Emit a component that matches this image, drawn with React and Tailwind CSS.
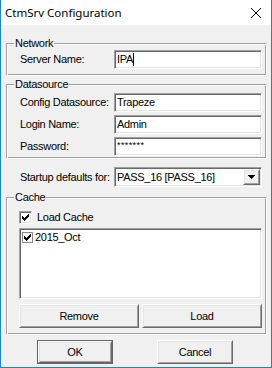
import React from 'react';

// classic Win32 3D edges
const sunken =
  'border border-t-[#a0a0a0] border-l-[#a0a0a0] border-r-white border-b-white shadow-[inset_1px_1px_0_#696969,inset_-1px_-1px_0_#e3e3e3]';
const raised =
  'border border-t-white border-l-white border-r-[#696969] border-b-[#696969] shadow-[inset_1px_1px_0_#e3e3e3,inset_-1px_-1px_0_#a0a0a0]';
const etched =
  'border border-t-[#a0a0a0] border-l-[#a0a0a0] border-r-white border-b-white shadow-[inset_1px_1px_0_#fff,inset_-1px_-1px_0_#a0a0a0]';

const Check = () => (
  <svg width="7" height="7" viewBox="0 0 7 7" shapeRendering="crispEdges">
    <path d="M0 2h1v3H0zM1 3h1v3H1zM2 4h1v3H2zM3 3h1v3H3zM4 2h1v3H4zM5 1h1v3H5zM6 0h1v3H6z" fill="#000" />
  </svg>
);

const GroupBox = ({ title, className = '', children }) => (
  <div className={`relative ${etched} ${className}`}>
    <span className="absolute -top-[7px] left-[7px] bg-[#f0f0f0] px-[1px] leading-[13px] whitespace-nowrap">{title}</span>
    {children}
  </div>
);

const Field = ({ label, children }) => (
  <div className="flex items-center">
    <span className="flex-1 min-w-0 pl-[1px] whitespace-nowrap">{label}</span>
    {children}
  </div>
);

const TextBox = ({ value, caret, password }) => (
  <div className={`w-[148px] h-[19px] shrink-0 bg-white ${sunken} flex items-center pl-[2px]`}>
    {password ? (
      <span className="whitespace-nowrap text-[9px] leading-none tracking-[0.4px] -mt-[2px]">{value}</span>
    ) : (
      <span className="whitespace-nowrap">{value}</span>
    )}
    {caret && <span className="w-px h-[13px] bg-black" />}
  </div>
);

const Button = ({ children, className = '' }) => (
  <button className={`bg-[#f0f0f0] ${raised} flex items-center justify-center font-normal ${className}`}>
    {children}
  </button>
);

export default function App() {
  return (
    <div className="w-[272px] h-[368px] flex flex-col bg-white border-x border-b border-[#1883d7] font-['Liberation_Sans',Arial,sans-serif] text-[11px] leading-[13px] tracking-[-0.3px] text-black select-none overflow-hidden">
      {/* Title bar */}
      <div className="h-[25px] shrink-0 flex items-center justify-between pl-[4px] pr-[10px] bg-white">
        <span className="font-['Noto_Sans',sans-serif] text-[11.5px] tracking-normal">CtmSrv Configuration</span>
        <svg width="10" height="10" viewBox="0 0 10 10">
          <path d="M0 0L10 10M10 0L0 10" stroke="#000" strokeWidth="1" />
        </svg>
      </div>

      <div className="flex-1 bg-[#f0f0f0] pl-[5px] pr-[4px]">
        <GroupBox title="Network" className="mt-[18px] pt-[6px] pb-[6px] pl-[12px] pr-[4px]">
          <Field label="Server Name:">
            <TextBox value="IPA" caret />
          </Field>
        </GroupBox>

        <GroupBox title="Datasource" className="mt-[8px] pt-[8px] pb-[2px] pl-[12px] pr-[4px] flex flex-col gap-[3px]">
          <Field label="Config Datasource:">
            <TextBox value="Trapeze" />
          </Field>
          <Field label="Login Name:">
            <TextBox value="Admin" />
          </Field>
          <Field label="Password:">
            <TextBox value="*******" password />
          </Field>
        </GroupBox>

        <div className="mt-[8px] pl-[13px] pr-[5px]">
          <Field label="Startup defaults for:">
            <div className={`w-[148px] h-[20px] shrink-0 bg-white ${sunken} flex p-[1px]`}>
              <span className="flex-1 pl-[1px] leading-[16px] whitespace-nowrap">PASS_16 [PASS_16]</span>
              <div className={`w-[17px] h-full bg-[#f0f0f0] ${raised} flex items-center justify-center`}>
                <svg width="7" height="4" viewBox="0 0 7 4" shapeRendering="crispEdges">
                  <path d="M0 0h7v1H0zM1 1h5v1H1zM2 2h3v1H2zM3 3h1v1H3z" fill="#000" />
                </svg>
              </div>
            </div>
          </Field>
        </div>

        <GroupBox title="Cache" className="mt-[10px] pt-[13px] pb-[6px] pl-[12px] pr-[4px]">
          <div className="flex items-center gap-[5px] h-[13px]">
            <div className={`w-[13px] h-[13px] bg-white ${sunken} flex items-center justify-center`}>
              <Check />
            </div>
            <span>Load Cache</span>
          </div>

          <div className={`mt-[4px] h-[71px] bg-white ${sunken} p-[1px]`}>
            <div className="flex items-center gap-[2px] pl-[1px] pt-[1px] h-[14px]">
              <div className="w-[11px] h-[11px] border border-[#8a8a8a] bg-white flex items-center justify-center">
                <Check />
              </div>
              <span>2015_Oct</span>
            </div>
          </div>

          <div className="mt-[5px] flex gap-[3px]">
            <Button className="flex-1 h-[24px]">Remove</Button>
            <Button className="flex-1 h-[24px]">Load</Button>
          </div>
        </GroupBox>

        <div className="mt-[5px] flex pl-[31px] gap-[44px]">
          <div className="w-[76px] h-[24px] border border-[#646464]">
            <Button className="w-full h-full">OK</Button>
          </div>
          <Button className="w-[76px] h-[24px]">Cancel</Button>
        </div>
      </div>
    </div>
  );
}
